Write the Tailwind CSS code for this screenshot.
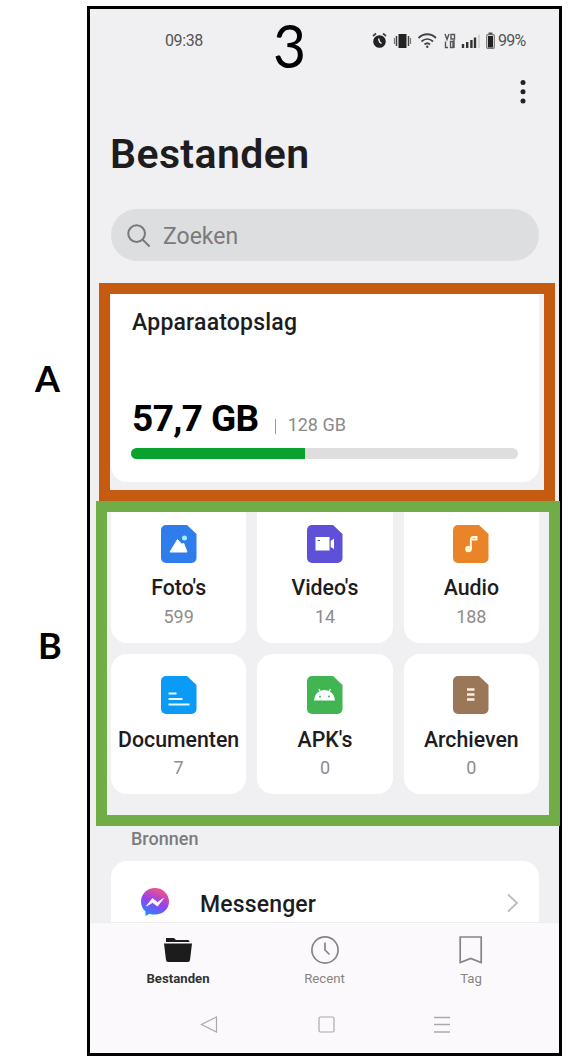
<!DOCTYPE html>
<html lang="nl">
<head>
<meta charset="utf-8">
<title>Bestanden</title>
<script src="https://cdn.jsdelivr.net/npm/@tailwindcss/browser@4"></script>
</head>
<body class="bg-white">
<div class="relative flex h-[1062px] w-[573px] overflow-hidden bg-white pt-[6px] font-['Roboto','Liberation_Sans',sans-serif] text-[#1d1d1f]">

  <!-- Side labels -->
  <div class="flex w-[87px] shrink-0 flex-col font-['Lato',sans-serif] text-[36px] leading-[40px] font-bold text-black">
    <span class="mt-[352px] pl-[35px]">A</span>
    <span class="mt-[227px] pl-[38px]">B</span>
  </div>

  <!-- Phone -->
  <div class="flex h-[1050px] w-[475px] shrink-0 flex-col border-3 border-black bg-[#f0f0f2]">

    <div class="flex h-[64px] shrink-0 items-center justify-between pr-[33px] pl-[75px] text-[16px] text-[#555]">
      <span class="tracking-[-0.4px]">09:38</span>
      <div class="flex items-center">
        <svg width="124" height="18" viewBox="0 0 124 18" fill="none">
          <circle cx="7.500" cy="9.500" r="5.300" fill="#222" stroke="#222" stroke-width="2"/>
          <path d="M1 4 4 1.500M14 4 11 1.500" stroke="#444" stroke-width="1.800"/>
          <path d="M6.500 6.500 7.500 9.800 9.500 11.500" stroke="#eee" stroke-width="1.400"/>
          <rect x="26.500" y="2" width="8" height="14" fill="#222"/>
          <path d="M24.500 4v10M36.500 4v10" stroke="#444" stroke-width="1.500"/>
          <path d="M22.500 6v6M38.500 6v6" stroke="#777" stroke-width="1.200"/>
          <path d="M46.500 6c5-5 12.500-5 17.500 0M49.500 9.500c3.500-3.300 8-3.300 11.500 0M52.500 12.500c1.800-1.600 3.800-1.600 5.500 0" stroke="#444" stroke-width="1.800"/>
          <circle cx="55.300" cy="14.700" r="1.200" fill="#444"/>
          <path d="M73 2l2 5.500 2-5.500M79 2.500h3.500v4.500h-3.500zM73.500 9.500v6h2.500M78.500 9.500h2.500v6h-2.500zM82 8v8" stroke="#555" stroke-width="1.400"/>
          <path d="M91 12v4M95.200 10v6M99.400 8v8M103 5.500v10.500" stroke="#333" stroke-width="2.400"/>
          <path d="M107 2.500v13.500" stroke="#ccc" stroke-width="1.500"/>
          <rect x="114.700" y="2.700" width="7.600" height="13.600" rx="1" stroke="#777" stroke-width="1.200"/>
          <rect x="116" y="4" width="5" height="11.500" fill="#222"/>
          <rect x="116.500" y="0.500" width="4" height="2" fill="#555"/>
        </svg>
        <span class="w-[30px] pl-[2px] text-[16px] leading-[18px] tracking-[-0.8px] whitespace-nowrap">99%</span>
      </div>
    </div>

    <div class="flex h-[38px] shrink-0 items-center justify-end pr-[33px]">
      <svg width="6" height="26" viewBox="0 0 6 26" fill="#222"><circle cx="3" cy="3.500" r="2.500"/><circle cx="3" cy="12.800" r="2.500"/><circle cx="3" cy="22" r="2.500"/></svg>
    </div>

    <h1 class="mt-[18px] h-[50px] shrink-0 pl-[20px] text-[41px] leading-[50px] font-semibold tracking-[0.400px]">Bestanden</h1>

    <div class="mx-[21px] mt-[30px] flex h-[52px] w-[428px] shrink-0 items-center rounded-full bg-[#dddedf] pl-[16px] text-[#7a7a7c]">
      <svg width="25" height="25" viewBox="0 0 26 26" fill="none" stroke="currentColor" stroke-width="2.100"><circle cx="10" cy="11" r="8.700"/><path d="M16 17l7.500 7.500"/></svg>
      <span class="ml-[11px] pt-[4px] text-[23px] leading-[48px]">Zoeken</span>
    </div>

    <!-- Storage -->
    <section class="mx-[21px] mt-[26px] flex h-[195px] w-[428px] shrink-0 flex-col rounded-b-2xl bg-white px-[20px] pt-[22px]">
      <h2 class="h-[28px] pl-px text-[23px] leading-[28px] font-medium tracking-[0.2px]">Apparaatopslag</h2>
      <div class="mt-[62px] flex h-[40px] items-center pl-px">
        <span class="text-[37px] leading-[40px] font-bold tracking-[-0.6px] text-black">57,7 GB</span>
        <span class="mt-[14px] ml-[16px] h-[15px] w-px bg-[#999]"></span>
        <span class="mt-[12px] ml-[12px] text-[18px] leading-[20px] text-[#8a8a8a]">128 GB</span>
      </div>
      <div class="mt-[9px] h-[11px] w-[387px] overflow-hidden rounded-full bg-[#dedede]"><div class="h-full w-[174px] bg-[#0aa22e]"></div></div>
    </section>

    <!-- Categories -->
    <section class="mx-[21px] mt-[21px] grid w-[428px] shrink-0 grid-cols-3 gap-[11px] text-center text-[21.300px] leading-[26px] font-medium">
      <div class="flex h-[140px] flex-col items-center rounded-b-2xl bg-white pt-[21.500px]">
        <svg width="36" height="38" viewBox="0 0 36 38"><path d="M5 0H26L35.500 9V33a5 5 0 0 1-5 5H5a5 5 0 0 1-5-5V5a5 5 0 0 1 5-5z" fill="#2f7ded"/><path d="M9 27 16.500 14.500l4.500 5 1.500-1.500L26 27z" fill="#fff" stroke="#fff" stroke-linejoin="round"/><circle cx="23.500" cy="13" r="2.500" fill="#9cf0ff"/></svg>
        <span class="mt-[12px]">Foto's</span>
        <span class="mt-[4px] text-[18px] leading-[24px] font-normal text-[#8d8d8d]">599</span>
      </div>
      <div class="flex h-[140px] flex-col items-center rounded-b-2xl bg-white pt-[21.500px]">
        <svg width="36" height="38" viewBox="0 0 36 38"><path d="M5 0H26L35.500 9V33a5 5 0 0 1-5 5H5a5 5 0 0 1-5-5V5a5 5 0 0 1 5-5z" fill="#5f50d8"/><path d="M8.500 12h14v13.500h-14zM23.700 16l3.300-2.500v10.500L23.700 22z" fill="#fff"/><path d="M10.500 15.500h2.500" stroke="#5f50d8"/></svg>
        <span class="mt-[12px]">Video's</span>
        <span class="mt-[4px] text-[18px] leading-[24px] font-normal text-[#8d8d8d]">14</span>
      </div>
      <div class="flex h-[140px] flex-col items-center rounded-b-2xl bg-white pt-[21.500px]">
        <svg width="36" height="38" viewBox="0 0 36 38"><path d="M5 0H26L35.500 9V33a5 5 0 0 1-5 5H5a5 5 0 0 1-5-5V5a5 5 0 0 1 5-5z" fill="#ea8428"/><circle cx="15.500" cy="24" r="3.300" fill="#fff6d8"/><path d="M17.900 24.500V14.500q0-2 2-2.500H23.500v2.500H18.500" fill="none" stroke="#fff6d8" stroke-width="2"/></svg>
        <span class="mt-[12px]">Audio</span>
        <span class="mt-[4px] text-[18px] leading-[24px] font-normal text-[#8d8d8d]">188</span>
      </div>
      <div class="flex h-[140px] flex-col items-center rounded-2xl bg-white pt-[21.500px]">
        <svg width="36" height="38" viewBox="0 0 36 38"><path d="M5 0H26L35.500 9V33a5 5 0 0 1-5 5H5a5 5 0 0 1-5-5V5a5 5 0 0 1 5-5z" fill="#0b9bf7"/><path d="M7.500 17.500h8M7.500 23h14M7.500 28.500h21" stroke="#e4f8ff" stroke-width="2.200"/></svg>
        <span class="mt-[13px]">Documenten</span>
        <span class="mt-[3px] text-[18px] leading-[24px] font-normal text-[#8d8d8d]">7</span>
      </div>
      <div class="flex h-[140px] flex-col items-center rounded-2xl bg-white pt-[21.500px]">
        <svg width="36" height="38" viewBox="0 0 36 38"><path d="M5 0H26L35.500 9V33a5 5 0 0 1-5 5H5a5 5 0 0 1-5-5V5a5 5 0 0 1 5-5z" fill="#40b552"/><path d="M7 24.500a10.500 10.500 0 0 1 21 0z" fill="#fff"/><path d="M12 13l2 4M23.500 13l-2 4" stroke="#fff" stroke-width="1.200"/><circle cx="13" cy="20.500" r="1" fill="#40b552"/><circle cx="22" cy="20.500" r="1" fill="#40b552"/></svg>
        <span class="mt-[13px]">APK's</span>
        <span class="mt-[3px] text-[18px] leading-[24px] font-normal text-[#8d8d8d]">0</span>
      </div>
      <div class="flex h-[140px] flex-col items-center rounded-2xl bg-white pt-[21.500px]">
        <svg width="36" height="38" viewBox="0 0 36 38"><path d="M5 0H26L35.500 9V33a5 5 0 0 1-5 5H5a5 5 0 0 1-5-5V5a5 5 0 0 1 5-5z" fill="#9a7758"/><path d="M14 13.500h7.500M14 18.500h7.500M14 23.500h7.500" stroke="#fff0e0" stroke-width="2.600"/></svg>
        <span class="mt-[13px]">Archieven</span>
        <span class="mt-[3px] text-[18px] leading-[24px] font-normal text-[#8d8d8d]">0</span>
      </div>
    </section>

    <h3 class="mt-[33px] h-[24px] shrink-0 pl-[41px] text-[18px] leading-[24px] font-medium text-[#7c7c7e]">Bronnen</h3>

    <div class="mx-[21px] mt-[10px] flex h-[61px] w-[428px] shrink-0 items-start rounded-t-2xl bg-white pt-[27px] pr-[20px] pl-[30px]">
      <svg width="30" height="30" viewBox="0 0 30 30"><defs><linearGradient id="m" x1="0.300" y1="1" x2="0.700" y2="0"><stop offset="0" stop-color="#1b8bff"/><stop offset="0.500" stop-color="#9a40ee"/><stop offset="1" stop-color="#f5577c"/></linearGradient></defs><path d="M14 0C6 0 0 6 0 13.500c0 4.300 1.700 7.500 4.500 10V28l4-2.200c1.700.6 3.500.8 5.500.8 8 0 14-5.600 14-13.100S22 0 14 0z" fill="url(#m)"/><path d="M5.500 18 11.500 10.500l5 4 6-4L16.500 18l-5-3.500z" fill="#fff" stroke="#fff" stroke-width="0.800"/></svg>
      <span class="mt-[3px] ml-[29px] text-[23px] leading-[28px] font-medium tracking-[0.15px]">Messenger</span>
      <svg class="mt-[5px] ml-auto" width="12" height="20" viewBox="0 0 12 20" fill="none" stroke="#bcbcbc" stroke-width="1.800"><path d="M1 1.500 10 10 1 18.500"/></svg>
    </div>

    <!-- Tabs -->
    <nav class="flex grow flex-col border-t border-[#ededf0] bg-[#fbf9fb] text-[13.200px] leading-[18px] text-[#858585]">
      <div class="grid h-[67px] grid-cols-[176px_117px_176px]">
        <div class="flex flex-col items-center pt-[13px] font-bold text-[#333]">
          <svg width="28" height="28" viewBox="0 0 28 28" fill="#1c1c1c"><path d="M2 2h8l2 2h12q1.500 0 1.500 2H2z"/><path d="M0 7.500h28L26 24q-.3 2-2 2H4q-1.700 0-2-2z"/></svg>
          <span class="mt-[6px]">Bestanden</span>
        </div>
        <div class="flex flex-col items-center pt-[13px]">
          <svg width="30" height="28" viewBox="0 0 30 28" fill="none" stroke="#858585" stroke-width="1.700"><circle cx="15" cy="14" r="13.100"/><path d="M15 6.500v7.500l4.500 4.500"/></svg>
          <span class="mt-[6px]">Recent</span>
        </div>
        <div class="flex flex-col items-center pt-[13px]">
          <svg width="24" height="28" viewBox="0 0 24 28" fill="none" stroke="#858585" stroke-width="1.700"><path d="M1.200 1h21v25.500L11.700 22.500 1.200 26.500z"/></svg>
          <span class="mt-[6px]">Tag</span>
        </div>
      </div>
      <div class="flex grow items-start justify-between pt-[26px] pr-[109px] pl-[110px]">
        <svg width="18" height="17" viewBox="0 0 18 17" fill="none" stroke="#aaa" stroke-width="1.200"><path d="M16.500 1v15L1.500 8.500z"/></svg>
        <svg width="17" height="17" viewBox="0 0 17 17" fill="none" stroke="#aaa" stroke-width="1.200"><rect x="1" y="1" width="15" height="15" rx="1.500"/></svg>
        <svg width="16" height="17" viewBox="0 0 16 17" fill="none" stroke="#aaa" stroke-width="1.300"><path d="M0 1.500h16M0 8.500h16M0 16h16"/></svg>
      </div>
    </nav>
  </div>

  <!-- Annotations over the phone -->
  <div class="absolute top-[12px] left-[273px] origin-left scale-x-95 font-['Lato',sans-serif] text-[60px] leading-[66px] text-black">3</div>
  <div class="absolute top-[283px] left-[99px] h-[218px] w-[456px] border-11 border-[#c55a11]"></div>
  <div class="absolute top-[501px] left-[96px] h-[325px] w-[464px] border-11 border-[#70ad47]"></div>
</div>
</body>
</html>
